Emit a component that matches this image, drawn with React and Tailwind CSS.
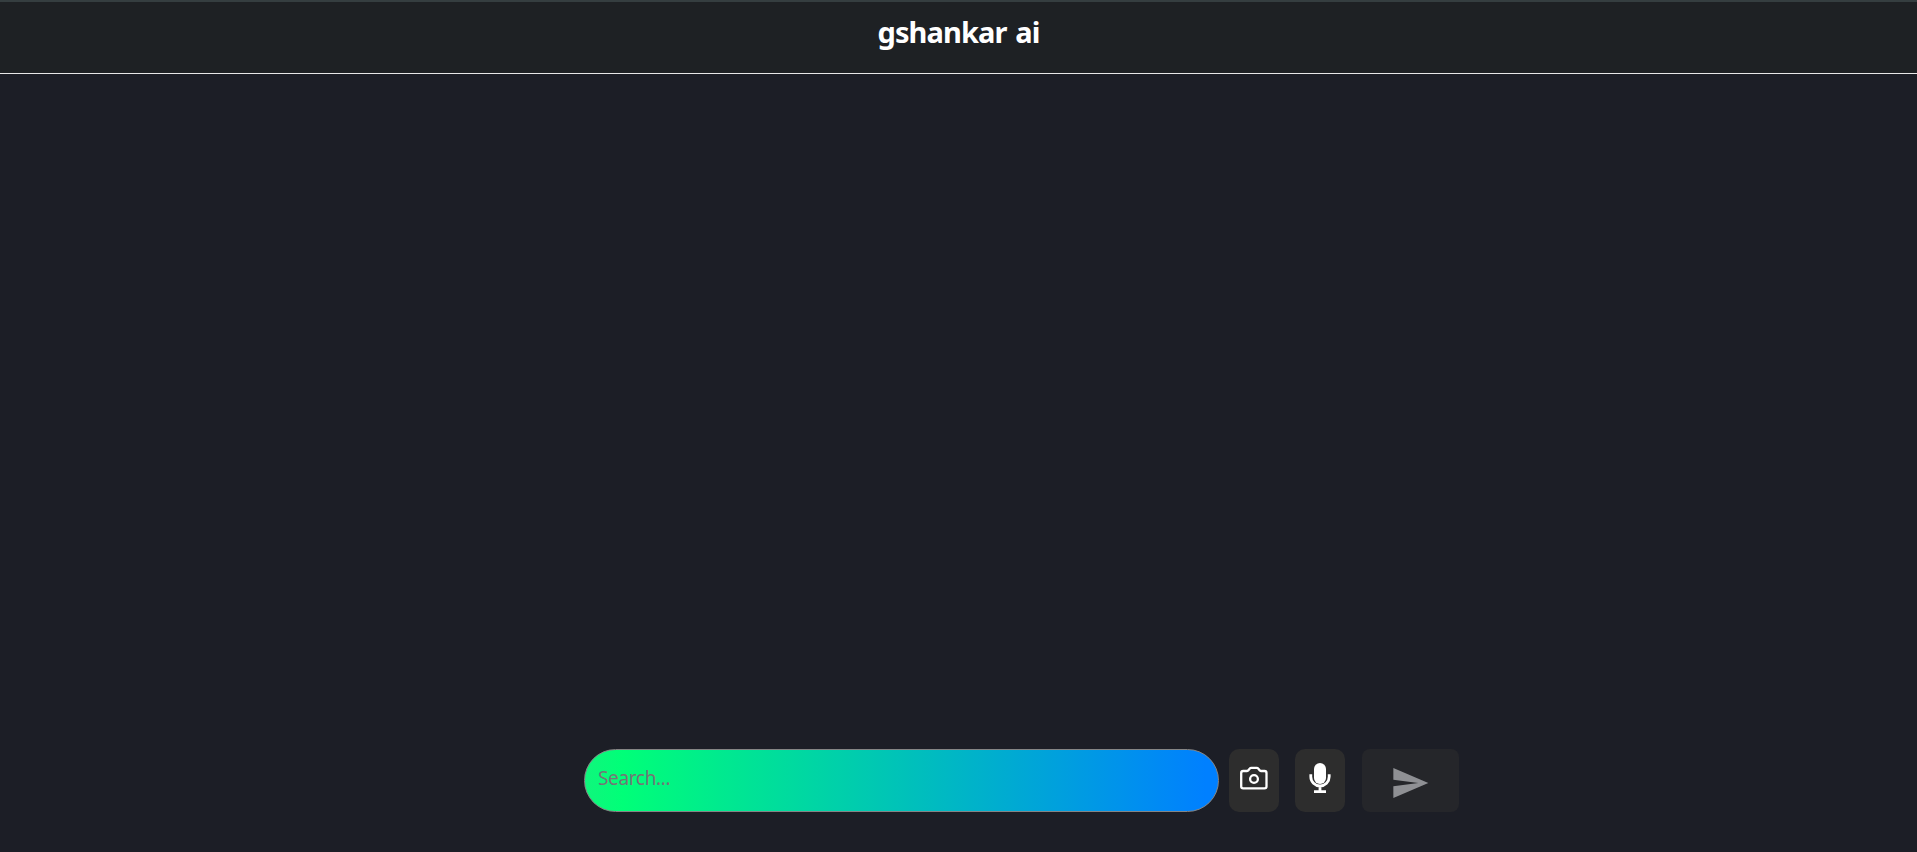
export default function App() {
  return (
    <div className="flex h-screen flex-col overflow-hidden bg-[#1c1e26] font-['Noto_Sans',sans-serif]">
      <header className="flex h-[74px] shrink-0 justify-center border-t-2 border-b border-t-[#353e40] border-b-[#e8e8e8] bg-[#1e2124] pt-[11px]">
        <h1 className="text-[29px] leading-[38px] font-bold tracking-[-0.9px] text-white [word-spacing:2px]">gshankar ai</h1>
      </header>
      <main className="flex-1" />
      <form className="mb-[40px] ml-[584px] flex h-[63px] shrink-0">
        <input
          type="text"
          placeholder="Search..."
          className="w-[635px] rounded-full border border-[#858585] bg-linear-to-r/srgb from-[#10f67c] via-[#00ff78] via-[6%] to-[#0080ff] to-[98%] px-[13px] pb-[5px] text-[19px] tracking-[-0.35px] text-[#757575] outline-none placeholder:text-[#757575]"
        />
        <button type="button" aria-label="Camera" className="ml-[10px] flex w-[50px] items-center justify-center rounded-[10px] bg-[#2d2d2d]">
          <svg viewBox="0 0 32 32" className="mb-[5px] size-8 text-white" fill="none" stroke="currentColor" strokeWidth="2.3" strokeLinejoin="round">
            <path d="M5.200 9h3.600c.6 0 1-.2 1.400-.6l1.600-1.900c.4-.5.9-.7 1.500-.7h5.400c.6 0 1.100.2 1.500.7l1.600 1.900c.4.4.8.6 1.400.6h3.300c1.100 0 2 .8 2 1.900V24.400c0 1.100-.9 1.900-2 1.900H5.200c-1.100 0-2-.8-2-1.900V10.900C3.200 9.800 4.100 9 5.200 9z" />
            <circle cx="16" cy="17" r="3.900" />
          </svg>
        </button>
        <button type="button" aria-label="Microphone" className="ml-[16px] flex w-[50px] items-center justify-center rounded-[10px] bg-[#2d2d2d]">
          <svg viewBox="0 0 32 32" className="mb-[6px] size-8 text-white" fill="none">
            <rect x="10" y="1" width="12" height="21" rx="6" fill="currentColor" />
            <path d="M6.800 12.300v2.500a9.200 9.200 0 0 0 18.400 0v-2.500M16 24v6M10 29.700h12" stroke="currentColor" strokeWidth="2.800" />
          </svg>
        </button>
        <button type="button" aria-label="Send" className="ml-[17px] flex w-[97px] items-center justify-center rounded-[8px] bg-[#25262a] pr-[2px]">
          <svg viewBox="0 0 24 24" className="mt-[5px] size-10 text-[#8f9094]" fill="currentColor">
            <path d="M2.010 21 23 12 2.010 3 2 10l15 2-15 2z" />
          </svg>
        </button>
      </form>
    </div>
  );
}
